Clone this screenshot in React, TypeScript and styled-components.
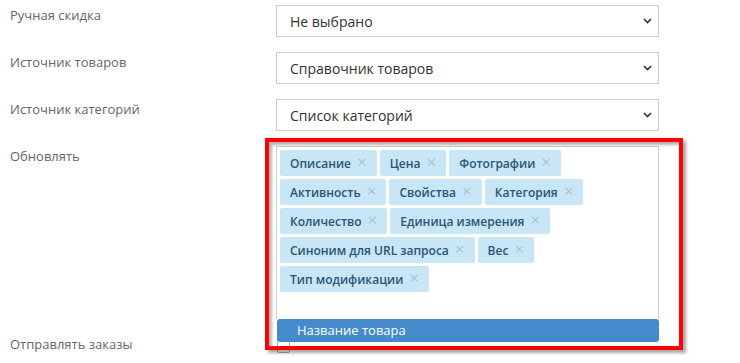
import { createGlobalStyle } from 'styled-components';
import styled from 'styled-components';

const GlobalStyle = createGlobalStyle`
  html, body {
    margin: 0;
    padding: 0;
    background: #ffffff;
    font-family: "Open Sans", "Liberation Sans", sans-serif;
  }
`;

const updateFields = [
  'Описание',
  'Цена',
  'Фотографии',
  'Активность',
  'Свойства',
  'Категория',
  'Количество',
  'Единица измерения',
  'Синоним для URL запроса',
  'Вес',
  'Тип модификации',
];

const Chevron = () => (
  <svg width="9" height="6" viewBox="0 0 9 6">
    <polyline points="1,1 4.5,4.5 8,1" fill="none" stroke="#333" strokeWidth="1.6" />
  </svg>
);

const SelectField = ({ value }: { value: string }) => (
  <SelectBox>
    <span>{value}</span>
    <Chevron />
  </SelectBox>
);

export default function App() {
  return (
    <Page>
      <GlobalStyle />
      <Form>
        <Row>
          <Label>Ручная скидка</Label>
          <SelectField value="Не выбрано" />
        </Row>
        <Row>
          <Label>Источник товаров</Label>
          <SelectField value="Справочник товаров" />
        </Row>
        <Row>
          <Label>Источник категорий</Label>
          <SelectField value="Список категорий" />
        </Row>
        <Row>
          <Label>Обновлять</Label>
          <MultiWrap>
            <MultiBox>
              {updateFields.map((f) => (
                <Tag key={f}>
                  {f}
                  <TagClose>×</TagClose>
                </Tag>
              ))}
              <SearchLine />
            </MultiBox>
            <Dropdown>
              <Option $active>Название товара</Option>
            </Dropdown>
          </MultiWrap>
        </Row>
        <Row>
          <Label>Отправлять заказы</Label>
          <CheckCell>
            <CheckBox />
          </CheckCell>
        </Row>
      </Form>
      <Highlight />
    </Page>
  );
}

const Page = styled.div`
  position: relative;
  width: 740px;
  height: 363px;
  overflow: hidden;
`;

const Form = styled.div`
  display: flex;
  flex-direction: column;
  gap: 15px;
  padding: 5px 0 0 10px;
`;

const Row = styled.div`
  display: grid;
  grid-template-columns: 266px 383px;
  align-items: start;
`;

const Label = styled.div`
  font-size: 13px;
  line-height: 20px;
  color: #666666;
`;

const SelectBox = styled.div`
  box-sizing: border-box;
  height: 32px;
  border: 1px solid #cccccc;
  display: flex;
  align-items: center;
  justify-content: space-between;
  padding: 0 6px 0 13px;
  font-size: 14px;
  color: #333333;
`;

const MultiWrap = styled.div`
  position: relative;
`;

const MultiBox = styled.div`
  box-sizing: border-box;
  border: 1px solid #cccccc;
  border-bottom: none;
  padding: 3px 3px 0 3px;
  display: flex;
  flex-wrap: wrap;
  gap: 3px;
  height: 173px;
  align-content: flex-start;
`;

const Tag = styled.span`
  display: inline-flex;
  align-items: center;
  height: 26px;
  padding: 0 10px;
  border-radius: 2px;
  background: #c8e6f5;
  color: #2a5575;
  font-size: 12px;
  font-weight: 600;
`;

const TagClose = styled.span`
  margin-left: 6px;
  color: #9dc6de;
  font-size: 17px;
  font-weight: 400;
  line-height: 1;
  position: relative;
  top: -2px;
`;

const SearchLine = styled.div`
  width: 100%;
  height: 24px;
`;

const Dropdown = styled.div`
  position: absolute;
  left: 1px;
  right: 0;
  top: 100%;
  background: #ffffff;
`;

const Option = styled.div<{ $active?: boolean }>`
  height: 23px;
  line-height: 23px;
  padding-left: 20px;
  border-radius: 3px;
  font-size: 13px;
  color: ${(p) => (p.$active ? '#ffffff' : '#333333')};
  background: ${(p) => (p.$active ? '#438bca' : 'transparent')};
`;

const CheckCell = styled.div`
  padding-top: 6px;
`;

const CheckBox = styled.span`
  display: block;
  width: 13px;
  height: 13px;
  box-sizing: border-box;
  border: 1px solid #aaaaaa;
  border-radius: 2px;
  margin-left: 1px;
`;

/* red annotation frame drawn over the screenshot */
const Highlight = styled.div`
  position: absolute;
  left: 265px;
  top: 138px;
  width: 418px;
  height: 212px;
  box-sizing: border-box;
  border: 4px solid #ff0000;
  box-shadow: 3px 3px 3px rgba(0, 0, 0, 0.35), inset 3px 3px 3px rgba(0, 0, 0, 0.3);
  pointer-events: none;
`;
